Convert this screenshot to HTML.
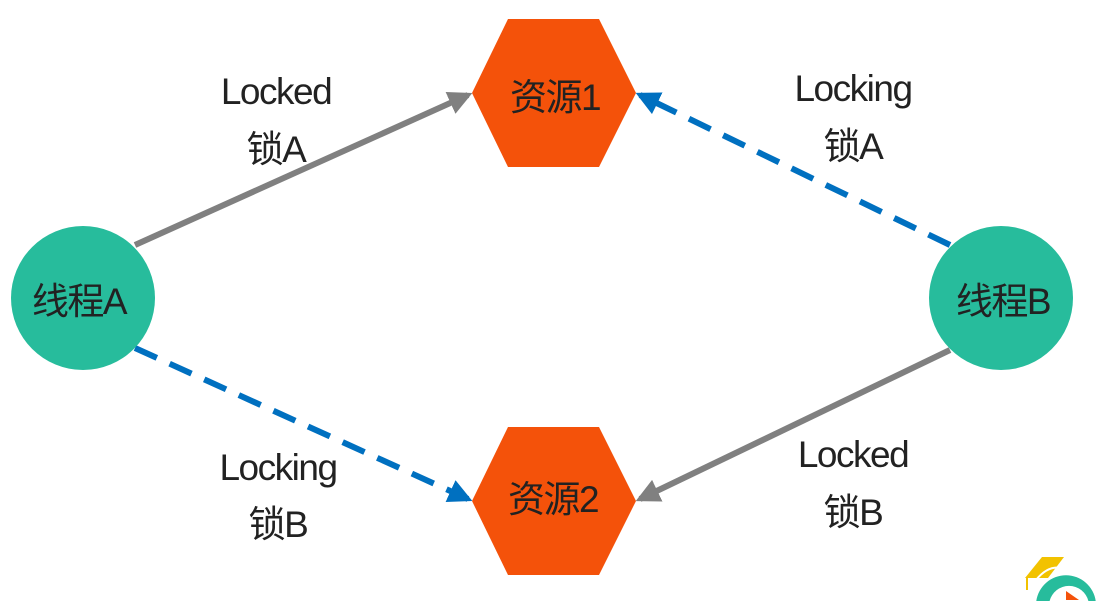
<!DOCTYPE html>
<html><head><meta charset="utf-8"><style>
html,body{margin:0;padding:0;background:#fff;width:1097px;height:601px;overflow:hidden}
svg{display:block}
svg text{font-family:"Liberation Sans","Noto Sans CJK SC",sans-serif;fill:#222;font-size:37px;letter-spacing:-1.5px;text-anchor:middle}
</style></head><body>
<svg width="1097" height="601" viewBox="0 0 1097 601">
<defs>
<marker id="ag" markerWidth="4" markerHeight="4" refX="3.2" refY="2" orient="auto" markerUnits="strokeWidth"><path d="M0,0 L4,2 L0,4 Z" fill="#808080"/></marker>
<marker id="ab" markerWidth="4" markerHeight="4" refX="3.2" refY="2" orient="auto" markerUnits="strokeWidth"><path d="M0,0 L4,2 L0,4 Z" fill="#0070c0"/></marker>
</defs>
<line x1="135" y1="245" x2="468" y2="95" stroke="#808080" stroke-width="6" marker-end="url(#ag)"/>
<line x1="950" y1="245" x2="640" y2="95" stroke="#0070c0" stroke-width="6" stroke-dasharray="24,14" marker-end="url(#ab)"/>
<line x1="135" y1="348" x2="468" y2="499" stroke="#0070c0" stroke-width="6" stroke-dasharray="24,14" marker-end="url(#ab)"/>
<line x1="950" y1="350" x2="640" y2="499" stroke="#808080" stroke-width="6" marker-end="url(#ag)"/>
<polygon points="508,19 599,19 636,93 599,167 508,167 472,93" fill="#f4520a"/>
<polygon points="508,427 599,427 636,501 599,575 508,575 472,501" fill="#f4520a"/>
<circle cx="83" cy="298" r="72" fill="#27bc9c"/>
<circle cx="1001" cy="298" r="72" fill="#27bc9c"/>
<text x="555" y="110">资源1</text>
<text x="553" y="512">资源2</text>
<text x="79" y="314">线程A</text>
<text x="1003" y="314">线程B</text>
<text x="276" y="104">Locked</text>
<text x="276" y="162">锁A</text>
<text x="853" y="101">Locking</text>
<text x="853" y="159">锁A</text>
<text x="278" y="480">Locking</text>
<text x="278" y="537">锁B</text>
<text x="853" y="467">Locked</text>
<text x="853" y="525">锁B</text>
<g>
<path d="M1025,578 L1042,557 L1064,557 L1048,578 Z" fill="#f2c200"/>
<path d="M1036,580 Q1048,565 1062,568" stroke="#fff" stroke-width="2" fill="none"/>
<line x1="1027" y1="578" x2="1027" y2="590" stroke="#f2c200" stroke-width="2"/>
<path d="M1036.3,601 A30,30 0 0 1 1095.7,601 Z" fill="#27bc9c"/>
<path d="M1049.6,601 A20,20 0 0 1 1088.4,601 Z" fill="#fff"/>
<path d="M1066,591 L1079,600 L1066,600 Z" fill="#f4520a"/>
</g>
</svg>
</body></html>
